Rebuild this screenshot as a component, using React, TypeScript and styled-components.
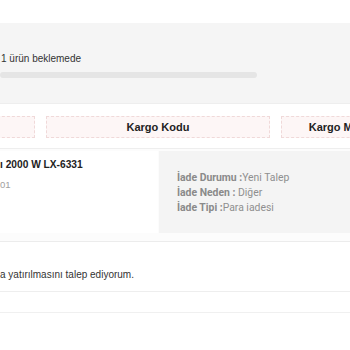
import React from "react";
import styled, { createGlobalStyle } from "styled-components";

const Global = createGlobalStyle`
  html, body { margin: 0; padding: 0; background: #ffffff; }
  body { font-family: "Liberation Sans", Arial, sans-serif; overflow: hidden; }
`;

const Page = styled.div`
  width: 350px;
  height: 350px;
  overflow: hidden;
  padding-top: 23px;
  box-sizing: border-box;
`;

const ProgressPanel = styled.div`
  background: #f5f5f5;
  height: 81px;
  box-sizing: border-box;
  padding: 29px 0 0 1px;
  border-bottom: 1px solid #eeeeee;
`;

const ProgressLabel = styled.div`
  font-size: 10px;
  line-height: 14px;
  color: #333333;
`;

const Bar = styled.div`
  margin-top: 6px;
  margin-left: -1px;
  width: 257px;
  height: 6px;
  border-radius: 3px;
  background: #e5e5e5;
`;

const CargoRow = styled.div`
  display: flex;
  gap: 11px;
  margin: 12px 0 0 -189px;
  height: 22px;
`;

const CargoBox = styled.div<{ $w: number }>`
  flex: 0 0 ${(p) => p.$w}px;
  box-sizing: border-box;
  border: 1px dashed #f0d9d9;
  background: #fdf6f6;
  display: flex;
  align-items: center;
  justify-content: center;
  font-weight: bold;
  font-size: 11px;
  color: #222222;
  white-space: nowrap;
`;

const Detail = styled.div`
  margin-top: 10px;
  border-top: 1px solid #eeeeee;
  padding: 2px 0 8px;
  display: flex;
  background: #fcfcfc;
  border-bottom: 1px solid #ececec;
`;

const ProductCard = styled.div`
  width: 158px;
  height: 82px;
  background: #ffffff;
  padding-top: 7px;
  box-sizing: border-box;
`;

const ProductName = styled.div`
  font-weight: bold;
  font-size: 10.2px;
  line-height: 14px;
  color: #222222;
  white-space: nowrap;
`;

const ProductCode = styled.div`
  margin-top: 7px;
  font-size: 9.5px;
  line-height: 12px;
  color: #a0a0a0;
`;

const ReturnPanel = styled.div`
  flex: 1;
  margin-left: 1px;
  height: 82px;
  background: #f4f4f4;
  box-sizing: border-box;
  padding: 19px 0 0 18px;
  font-family: Roboto, "Liberation Sans", sans-serif;
  font-size: 10.4px;
  line-height: 15px;
  color: #8f8f8f;
`;

const InfoLine = styled.div`
  white-space: nowrap;
`;

const Key = styled.span`
  font-weight: bold;
  color: #8a8a8a;
`;

const NoteRow = styled.div`
  height: 50px;
  box-sizing: border-box;
  padding-top: 26px;
  font-size: 10px;
  line-height: 14px;
  color: #333333;
  border-bottom: 1px solid #eeeeee;
  white-space: nowrap;
`;

const EmptyRow = styled.div`
  height: 20px;
  border-bottom: 1px solid #f0f0f0;
`;

export default function App() {
  return (
    <>
      <Global />
      <Page>
        <ProgressPanel>
          <ProgressLabel>1 ürün beklemede</ProgressLabel>
          <Bar />
        </ProgressPanel>
        <CargoRow>
          <CargoBox $w={224}>Kargo Firması</CargoBox>
          <CargoBox $w={224}>Kargo Kodu</CargoBox>
          <CargoBox $w={124}>Kargo Mesajı</CargoBox>
        </CargoRow>
        <Detail>
          <ProductCard>
            <ProductName>ı 2000 W LX-6331</ProductName>
            <ProductCode>01</ProductCode>
          </ProductCard>
          <ReturnPanel>
            <InfoLine>
              <Key>İade Durumu :</Key>Yeni Talep
            </InfoLine>
            <InfoLine>
              <Key>İade Neden :</Key> Diğer
            </InfoLine>
            <InfoLine>
              <Key>İade Tipi :</Key>Para iadesi
            </InfoLine>
          </ReturnPanel>
        </Detail>
        <NoteRow>a yatırılmasını talep ediyorum.</NoteRow>
        <EmptyRow />
      </Page>
    </>
  );
}
